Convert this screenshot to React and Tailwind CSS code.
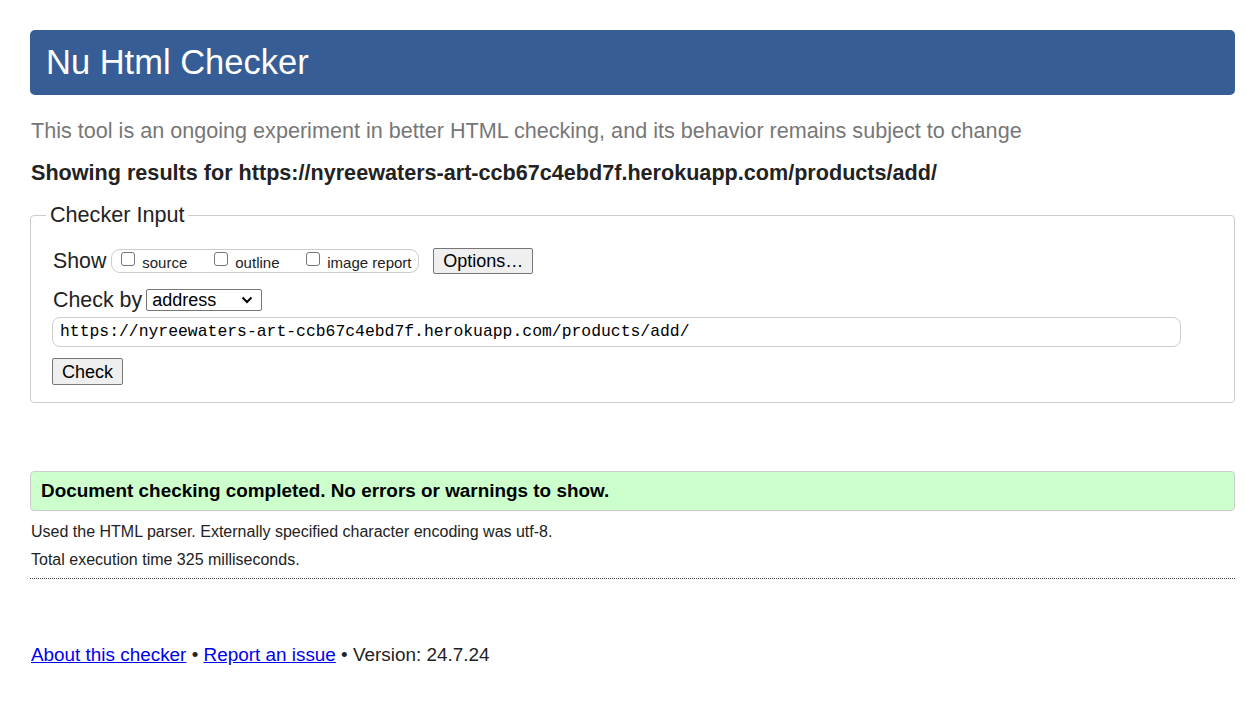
import React from "react";

function Box() {
  return (
    <span className="inline-block w-[14px] h-[14px] border border-[#767676] rounded-[3px] bg-white relative top-[-5px] mr-[7px] shrink-0" />
  );
}

export default function App() {
  return (
    <div className="pl-[30px] pr-[11px] pt-[30px] pb-[40px] bg-white text-[#222] font-['Liberation_Sans',Arial,sans-serif] min-h-[706px]">
      <div className="h-[65px] bg-[#365d95] rounded-[5px] flex items-center pl-[16px]">
        <h1 className="text-white text-[34.5px] leading-none">Nu Html Checker</h1>
      </div>
      <p className="mt-[24px] text-[21.6px] leading-[24px] text-[#777] pl-[1px]">
        This tool is an ongoing experiment in better HTML checking, and its behavior remains subject to change
      </p>
      <p className="mt-[18px] text-[21.6px] leading-[24px] font-bold text-[#222] pl-[1px]">
        Showing results for https://nyreewaters-art-ccb67c4ebd7f.herokuapp.com/products/add/
      </p>
      <fieldset className="mt-[18px] border border-[#ccc] rounded-[4px] pl-[21px] pr-[53px] pb-[17px] pt-[22px]">
        <legend className="text-[21.6px] leading-[24px] px-[4px] ml-[-6px] text-[#222]">Checker Input</legend>
        <div className="flex items-center h-[28px] mt-[-2px] pl-[1px]">
          <span className="text-[21.3px] leading-[24px] mr-[5px]">Show</span>
          <div className="h-[24px] w-[308px] border border-[#ccc] rounded-[9px] flex items-end pl-[9px] pb-[1px] text-[15px] leading-[16px]">
            <label className="flex items-end w-[93px]"><Box />source</label>
            <label className="flex items-end w-[92px]"><Box />outline</label>
            <label className="flex items-end"><Box />image report</label>
          </div>
          <button className="ml-[14px] h-[26px] w-[100px] bg-[#efefef] border border-[#767676] rounded-[2px] text-[18px] leading-none text-black">
            Options…
          </button>
        </div>
        <div className="flex items-center mt-[13px] h-[24px] pl-[1px]">
          <span className="text-[21.4px] leading-[24px] mr-[4px]">Check by</span>
          <div className="h-[22px] w-[116px] border border-[#767676] rounded-[2px] flex items-center justify-between pl-[5px] pr-[8px] text-[18px] text-black">
            <span>address</span>
            <svg width="12" height="8" viewBox="0 0 12 8" fill="none" stroke="#000" strokeWidth="2">
              <path d="M1.5 1.5 L6 6 L10.5 1.5" />
            </svg>
          </div>
        </div>
        <div className="mt-[5px] h-[30px] border border-[#ccc] rounded-[8px] flex items-center pl-[7px] font-['Liberation_Mono',monospace] text-[16.4px] text-black">
          https://nyreewaters-art-ccb67c4ebd7f.herokuapp.com/products/add/
        </div>
        <button className="mt-[11px] h-[27px] w-[71px] bg-[#efefef] border border-[#767676] rounded-[2px] text-[18px] leading-none text-black">
          Check
        </button>
      </fieldset>
      <div className="mt-[68px] h-[40px] bg-[#ccffcc] border border-[#ccc] rounded-[4px] flex items-center pl-[10px] text-[18.9px] font-bold text-black">
        Document checking completed. No errors or warnings to show.
      </div>
      <p className="mt-[11px] text-[16px] leading-[20px] pl-[1px]">Used the HTML parser. Externally specified character encoding was utf-8.</p>
      <p className="mt-[8px] text-[16px] leading-[20px] pl-[1px]">Total execution time 325 milliseconds.</p>
      <div className="mt-[8px] border-t border-dotted border-[#444]" />
      <p className="mt-[65px] text-[18.9px] leading-[22px] pl-[1px]">
        <a href="#" className="text-[#0000ee] underline">About this checker</a> •{" "}
        <a href="#" className="text-[#0000ee] underline">Report an issue</a> • Version: 24.7.24
      </p>
    </div>
  );
}
